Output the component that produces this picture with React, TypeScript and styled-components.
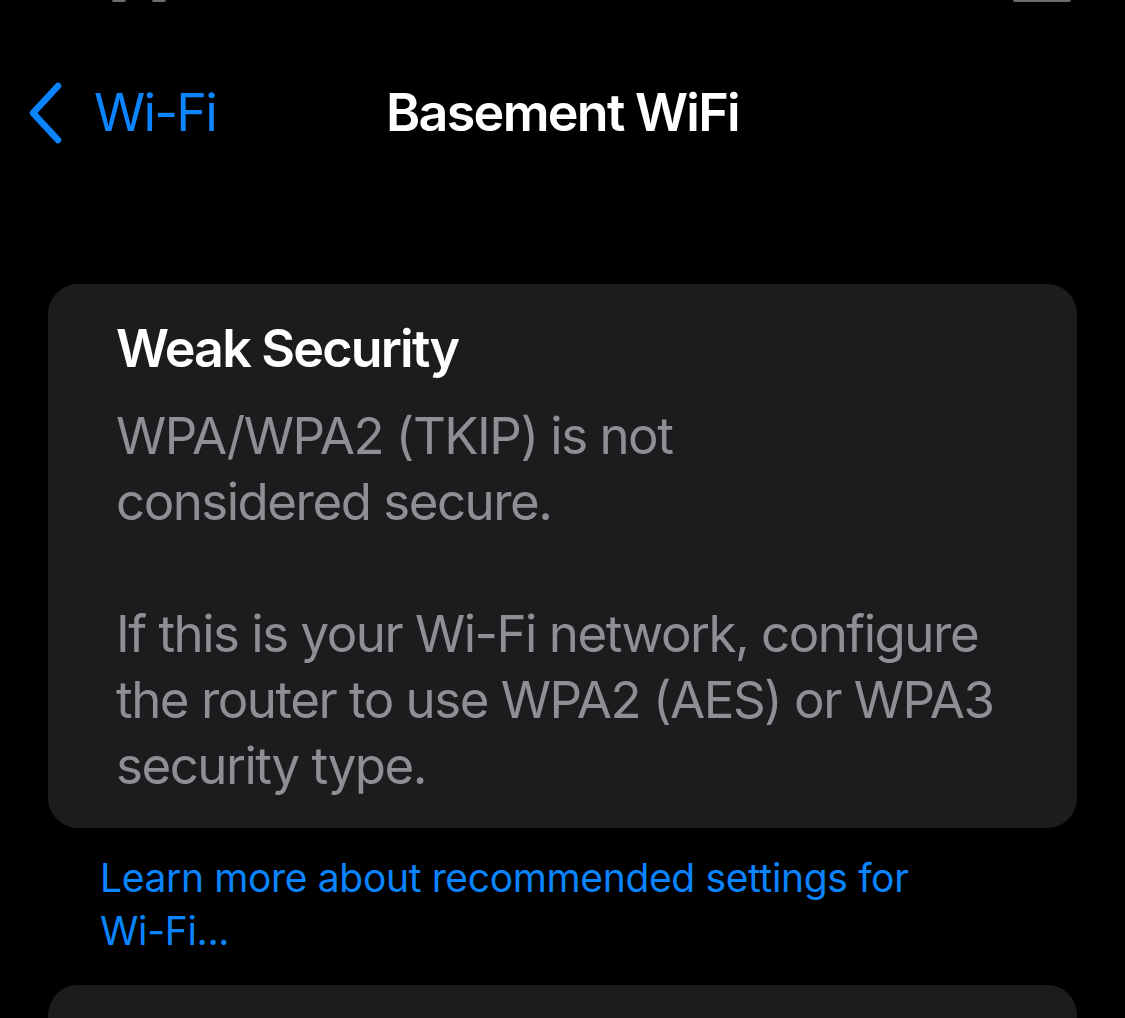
import React from "react";
import styled, { createGlobalStyle } from "styled-components";

const Global = createGlobalStyle`
  html, body { margin: 0; padding: 0; background: #000; }
  body { font-family: Inter, "Noto Sans", "Liberation Sans", sans-serif; -webkit-font-smoothing: antialiased; }
`;

const Page = styled.div`
  width: 1125px;
  height: 1018px;
  overflow: hidden;
  background: #000;
  display: flex;
  flex-direction: column;
`;

const StatusStrip = styled.div`
  height: 3px;
  flex-shrink: 0;
  position: relative;
`;

const StatusMark = styled.span<{ $left: number; $width: number }>`
  position: absolute;
  top: 0;
  left: ${(p) => p.$left}px;
  width: ${(p) => p.$width}px;
  height: 2px;
  border-radius: 0 0 4px 4px;
  background: #9a9a9a;
  opacity: 0.7;
`;

const NavBar = styled.div`
  margin-top: 79px;
  height: 60px;
  flex-shrink: 0;
  display: grid;
  grid-template-columns: 1fr auto 1fr;
  align-items: center;
`;

const BackButton = styled.div`
  display: flex;
  align-items: center;
  gap: 30px;
  padding-left: 26px;
  color: #0a84ff;
  font-size: 52px;
  line-height: 60px;
  letter-spacing: -1.8px;
`;

const Title = styled.div`
  color: #fff;
  font-size: 52px;
  line-height: 60px;
  font-weight: 600;
  letter-spacing: -1.7px;
  white-space: nowrap;
`;

const Card = styled.div`
  margin: 142px 48px 0;
  flex-shrink: 0;
  background: #1c1c1e;
  border-radius: 30px;
  padding: 32px 40px 29px 68px;
`;

const CardTitle = styled.div`
  color: #fff;
  font-size: 52px;
  line-height: 66px;
  font-weight: 600;
  letter-spacing: -1.8px;
`;

const Body = styled.div`
  margin-top: 21px;
  color: #8e8e93;
  font-size: 51px;
  line-height: 66px;
  letter-spacing: -1.5px;
  white-space: nowrap;
`;

const Footer = styled.div`
  margin: 23px 48px 0 100px;
  flex-shrink: 0;
  color: #0a84ff;
  font-size: 39px;
  line-height: 53px;
  letter-spacing: -0.35px;
  white-space: nowrap;
`;

const NextCard = styled.div`
  margin: 28px 48px 0;
  height: 120px;
  flex-shrink: 0;
  background: #1c1c1e;
  border-radius: 30px;
`;

export default function App() {
  return (
    <Page>
      <Global />
      <StatusStrip>
        <StatusMark $left={112} $width={14} />
        <StatusMark $left={152} $width={14} />
        <StatusMark $left={1013} $width={58} />
      </StatusStrip>
      <NavBar>
        <BackButton>
          <svg width="38" height="62" viewBox="0 0 38 62" fill="none">
            <path d="M32 4 L7 31 L32 58" stroke="#0a84ff" strokeWidth="6.5" strokeLinecap="round" strokeLinejoin="round" />
          </svg>
          <span>Wi-Fi</span>
        </BackButton>
        <Title>Basement WiFi</Title>
        <div />
      </NavBar>
      <Card>
        <CardTitle>Weak Security</CardTitle>
        <Body>
          WPA/WPA2 (TKIP) is not
          <br />
          considered secure.
          <br />
          <br />
          If this is your Wi-Fi network, configure
          <br />
          the router to use WPA2 (AES) or WPA3
          <br />
          security type.
        </Body>
      </Card>
      <Footer>
        Learn more about recommended settings for
        <br />
        Wi-Fi...
      </Footer>
      <NextCard />
    </Page>
  );
}
